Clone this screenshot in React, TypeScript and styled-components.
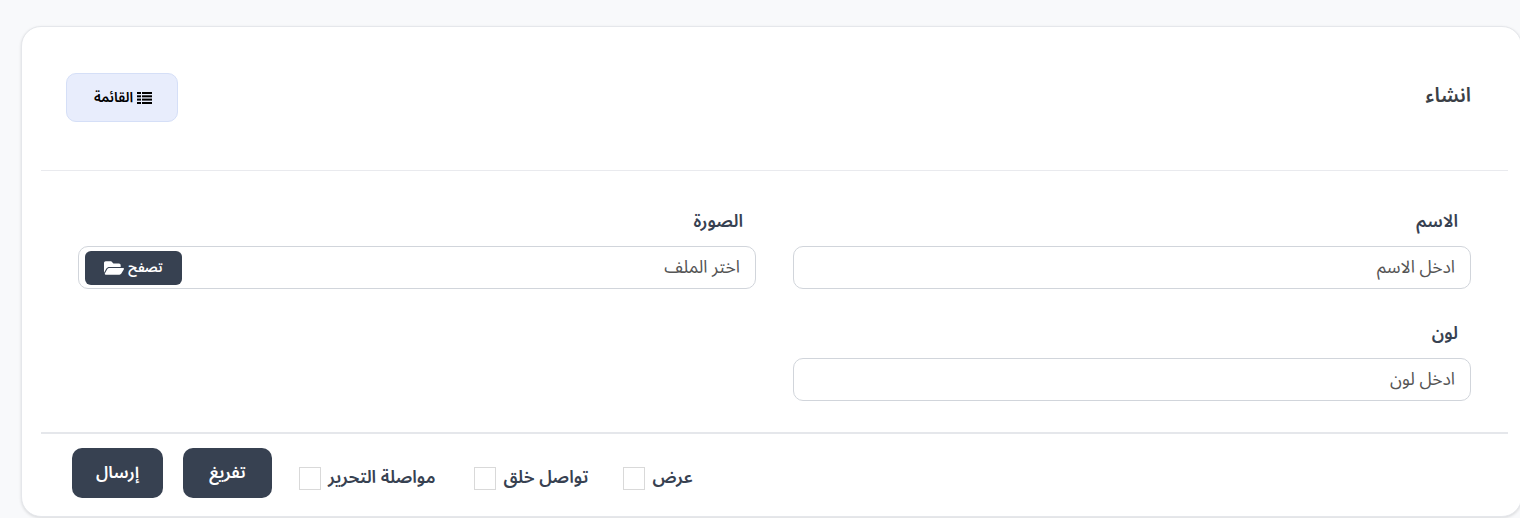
import React from "react";
import styled, { createGlobalStyle } from "styled-components";
import { FaFolderOpen } from "react-icons/fa";

const FONT = `"Noto Sans Arabic", "Noto Sans", "DejaVu Sans", sans-serif`;

const GlobalStyle = createGlobalStyle`
  html, body {
    margin: 0;
    height: 518px;
    overflow: hidden;
    background: #f8f9fb;
    font-family: ${FONT};
  }
  * {
    box-sizing: border-box;
  }
`;

const Page = styled("div")`
  padding: 26px 0 0 21px;
  width: 1520px;
  height: 518px;
  overflow: hidden;
`;

const Card = styled("div")`
  width: 1501px;
  height: 491px;
  background: #fff;
  border: 1px solid #e5e7eb;
  border-radius: 20px;
  box-shadow: 0 1px 3px rgba(0, 0, 0, 0.12);
  padding: 0 13px 0 19px;
  direction: rtl;
`;

const Header = styled("div")`
  height: 144px;
  display: flex;
  align-items: center;
  justify-content: space-between;
  border-bottom: 1px solid #e9eaee;
  padding: 0 37px 2px 25px;
`;

const Title = styled("h4")`
  margin: 0 0 4px;
  font-size: 20px;
  font-weight: 600;
  color: #3b3f46;
`;

const ListButton = styled("button")`
  width: 112px;
  height: 49px;
  display: flex;
  align-items: center;
  justify-content: center;
  gap: 4px;
  padding: 0 0 0 2px;
  background: #e8edfc;
  border: 1px solid #d5dff7;
  border-radius: 10px;
  color: #000;
  font: 600 14px ${FONT};
`;

const FormGrid = styled("div")`
  height: 261px;
  display: grid;
  grid-template-columns: 678px 678px;
  grid-auto-rows: 112px;
  column-gap: 37px;
  padding: 37px 37px 0;
`;

const Field = styled("div")`
  display: flex;
  flex-direction: column;
`;

const Label = styled("label")`
  height: 38px;
  padding: 0 13px;
  font-size: 17.5px;
  font-weight: 600;
  line-height: 28px;
  color: #374151;
`;

const InputBox = styled("div")`
  height: 43px;
  display: flex;
  align-items: center;
  justify-content: space-between;
  border: 1px solid #d1d5db;
  border-radius: 10px;
  padding: 0 15px 0 6px;
`;

const TextInput = styled("input")`
  flex: 1;
  min-width: 0;
  border: 0;
  outline: 0;
  padding: 0;
  background: transparent;
  font: 400 17.5px ${FONT};
  &::placeholder {
    color: #555;
    opacity: 1;
  }
`;

const BrowseButton = styled("button")`
  width: 97px;
  height: 34px;
  display: flex;
  align-items: center;
  justify-content: center;
  gap: 4px;
  background: #374151;
  border: 0;
  border-radius: 6px;
  color: #fff;
  font: 600 13.5px ${FONT};
`;

const Footer = styled("div")`
  height: 84px;
  display: flex;
  align-items: center;
  justify-content: flex-end;
  border-top: 2px solid #e5e7eb;
  padding: 0 0 5px 31px;
`;

const Check = styled("label")<{ $gap: number }>`
  display: flex;
  align-items: center;
  gap: 7px;
  margin: 9px 0 0 ${(p) => p.$gap}px;
  font-size: 17.5px;
  font-weight: 600;
  color: #374151;
`;

const Box = styled("span")`
  width: 22px;
  height: 23px;
  margin-top: 2px;
  background: #fff;
  border: 1px solid #d9d9d9;
`;

const ActionButton = styled("button")<{ $width: number; $gap: number }>`
  width: ${(p) => p.$width}px;
  height: 50px;
  margin-left: ${(p) => p.$gap}px;
  background: #374151;
  border: 0;
  border-radius: 10px;
  color: #fff;
  font: 600 17px ${FONT};
`;

const ListIcon = () => (
  <svg width="15" height="12" viewBox="0 0 15 12" fill="currentColor">
    <rect x="0" y="0" width="4" height="2" />
    <rect x="5" y="0" width="10" height="2" />
    <rect x="0" y="3.3" width="4" height="2" />
    <rect x="5" y="3.3" width="10" height="2" />
    <rect x="0" y="6.6" width="4" height="2" />
    <rect x="5" y="6.6" width="10" height="2" />
    <rect x="0" y="10" width="4" height="2" />
    <rect x="5" y="10" width="10" height="2" />
  </svg>
);

export default function App() {
  return (
    <>
      <GlobalStyle />
      <Page>
        <Card>
          <Header>
            <Title>انشاء</Title>
            <ListButton>
              <ListIcon />
              القائمة
            </ListButton>
          </Header>
          <FormGrid>
            <Field>
              <Label>الاسم</Label>
              <InputBox>
                <TextInput placeholder="ادخل الاسم" />
              </InputBox>
            </Field>
            <Field>
              <Label>الصورة</Label>
              <InputBox>
                <TextInput placeholder="اختر الملف" />
                <BrowseButton>
                  تصفح
                  <FaFolderOpen size={20} />
                </BrowseButton>
              </InputBox>
            </Field>
            <Field>
              <Label>لون</Label>
              <InputBox>
                <TextInput placeholder="ادخل لون" />
              </InputBox>
            </Field>
          </FormGrid>
          <Footer>
            <Check $gap={35}>
              عرض
              <Box />
            </Check>
            <Check $gap={39}>
              تواصل خلق
              <Box />
            </Check>
            <Check $gap={27}>
              مواصلة التحرير
              <Box />
            </Check>
            <ActionButton $width={89} $gap={20}>
              تفريغ
            </ActionButton>
            <ActionButton $width={91} $gap={0}>
              إرسال
            </ActionButton>
          </Footer>
        </Card>
      </Page>
    </>
  );
}
